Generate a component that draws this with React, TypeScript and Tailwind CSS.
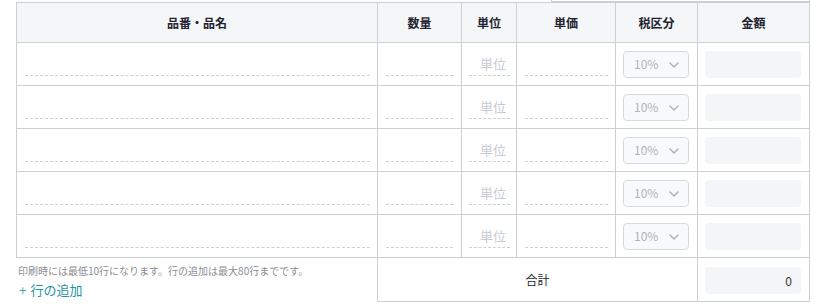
import React from "react";

const font = { fontFamily: '"Noto Sans CJK JP", "Noto Sans", sans-serif' };

function Chevron() {
  return (
    <svg width="10" height="6" viewBox="0 0 10 6" fill="none">
      <path d="M1 1l4 4 4-4" stroke="#a8adb4" strokeWidth="1.3" strokeLinecap="round" strokeLinejoin="round" />
    </svg>
  );
}

function Row() {
  return (
    <>
      <div className="h-[43px] border-r border-b border-[#cbd0d8] px-[8px] pr-[7px] flex items-end pb-[9px]">
        <div className="w-full border-b border-dashed border-[#cfcfcf] h-[1px]" />
      </div>
      <div className="h-[43px] border-r border-b border-[#cbd0d8] px-[8px] flex items-end pb-[9px]">
        <div className="w-full border-b border-dashed border-[#cfcfcf] h-[1px]" />
      </div>
      <div className="h-[43px] border-r border-b border-[#cbd0d8] pl-[7px] pr-[6px] flex items-end pb-[9px]">
        <div className="w-full border-b border-dashed border-[#cfcfcf] text-right pr-[4px] text-[13px] leading-[22px] text-[#c6cbd3]">
          単位
        </div>
      </div>
      <div className="h-[43px] border-r border-b border-[#cbd0d8] pl-[8px] pr-[7px] flex items-end pb-[9px]">
        <div className="w-full border-b border-dashed border-[#cfcfcf] h-[1px]" />
      </div>
      <div className="h-[43px] border-r border-b border-[#cbd0d8] pl-[7px] pt-[8px]">
        <div className="w-[66px] h-[27px] border border-[#d6dae0] rounded-[4px] bg-[#f8f9fa] flex items-center justify-between pl-[10px] pr-[9px]">
          <span className="text-[12px] leading-[14px] -mt-[2px] text-[#b4b4b4]">10%</span>
          <Chevron />
        </div>
      </div>
      <div className="h-[43px] border-r border-b border-[#cbd0d8] pl-[7px] pt-[8px]">
        <div className="w-[96px] h-[27px] rounded-[4px] bg-[#f4f5f7]" />
      </div>
    </>
  );
}

export default function App() {
  const cols = "grid grid-cols-[361px_84px_55px_99px_82px_112px]";
  return (
    <div style={font} className="w-[826px] h-[304px] bg-white overflow-hidden">
      <div className="h-[2px] ml-[551px] w-[259px] border-l border-r border-b border-[#cbd0d8]" />
      <div className={`${cols} ml-[16px] w-[794px] border-l border-t border-[#cbd0d8]`}>
        {["品番・品名", "数量", "単位", "単価", "税区分", "金額"].map((h) => (
          <div
            key={h}
            className="h-[40px] bg-[#f5f6f8] border-r border-b border-[#cbd0d8] flex items-center justify-center text-[12px] font-bold text-[#1f2330]"
          >
            {h}
          </div>
        ))}
        <Row />
        <Row />
        <Row />
        <Row />
        <Row />
      </div>
      <div className="ml-[16px] w-[794px] pl-[1px] grid grid-cols-[361px_320px_112px]">
        <div className="h-[44px] border-r border-[#cbd0d8] pl-[1px] pt-[6px]">
          <div className="text-[10px] leading-[14px] text-[#8a8d92]">
            印刷時には最低10行になります。行の追加は最大80行までです。
          </div>
          <div className="mt-[3px] pl-[1px] text-[13px] leading-[18px] text-[#1e95a0] flex items-center gap-[4px]">
            <span className="text-[14px] font-light">+</span>
            <span>行の追加</span>
          </div>
        </div>
        <div className="h-[44px] border-r border-b border-[#cbd0d8] flex items-center justify-center text-[12px] text-[#1f2330]">
          合計
        </div>
        <div className="h-[44px] border-r border-b border-[#cbd0d8] pl-[7px] pt-[9px]">
          <div className="w-[96px] h-[27px] rounded-[4px] bg-[#f4f5f7] flex items-center justify-end pr-[9px] text-[12px] text-[#333]">
            0
          </div>
        </div>
      </div>
    </div>
  );
}
